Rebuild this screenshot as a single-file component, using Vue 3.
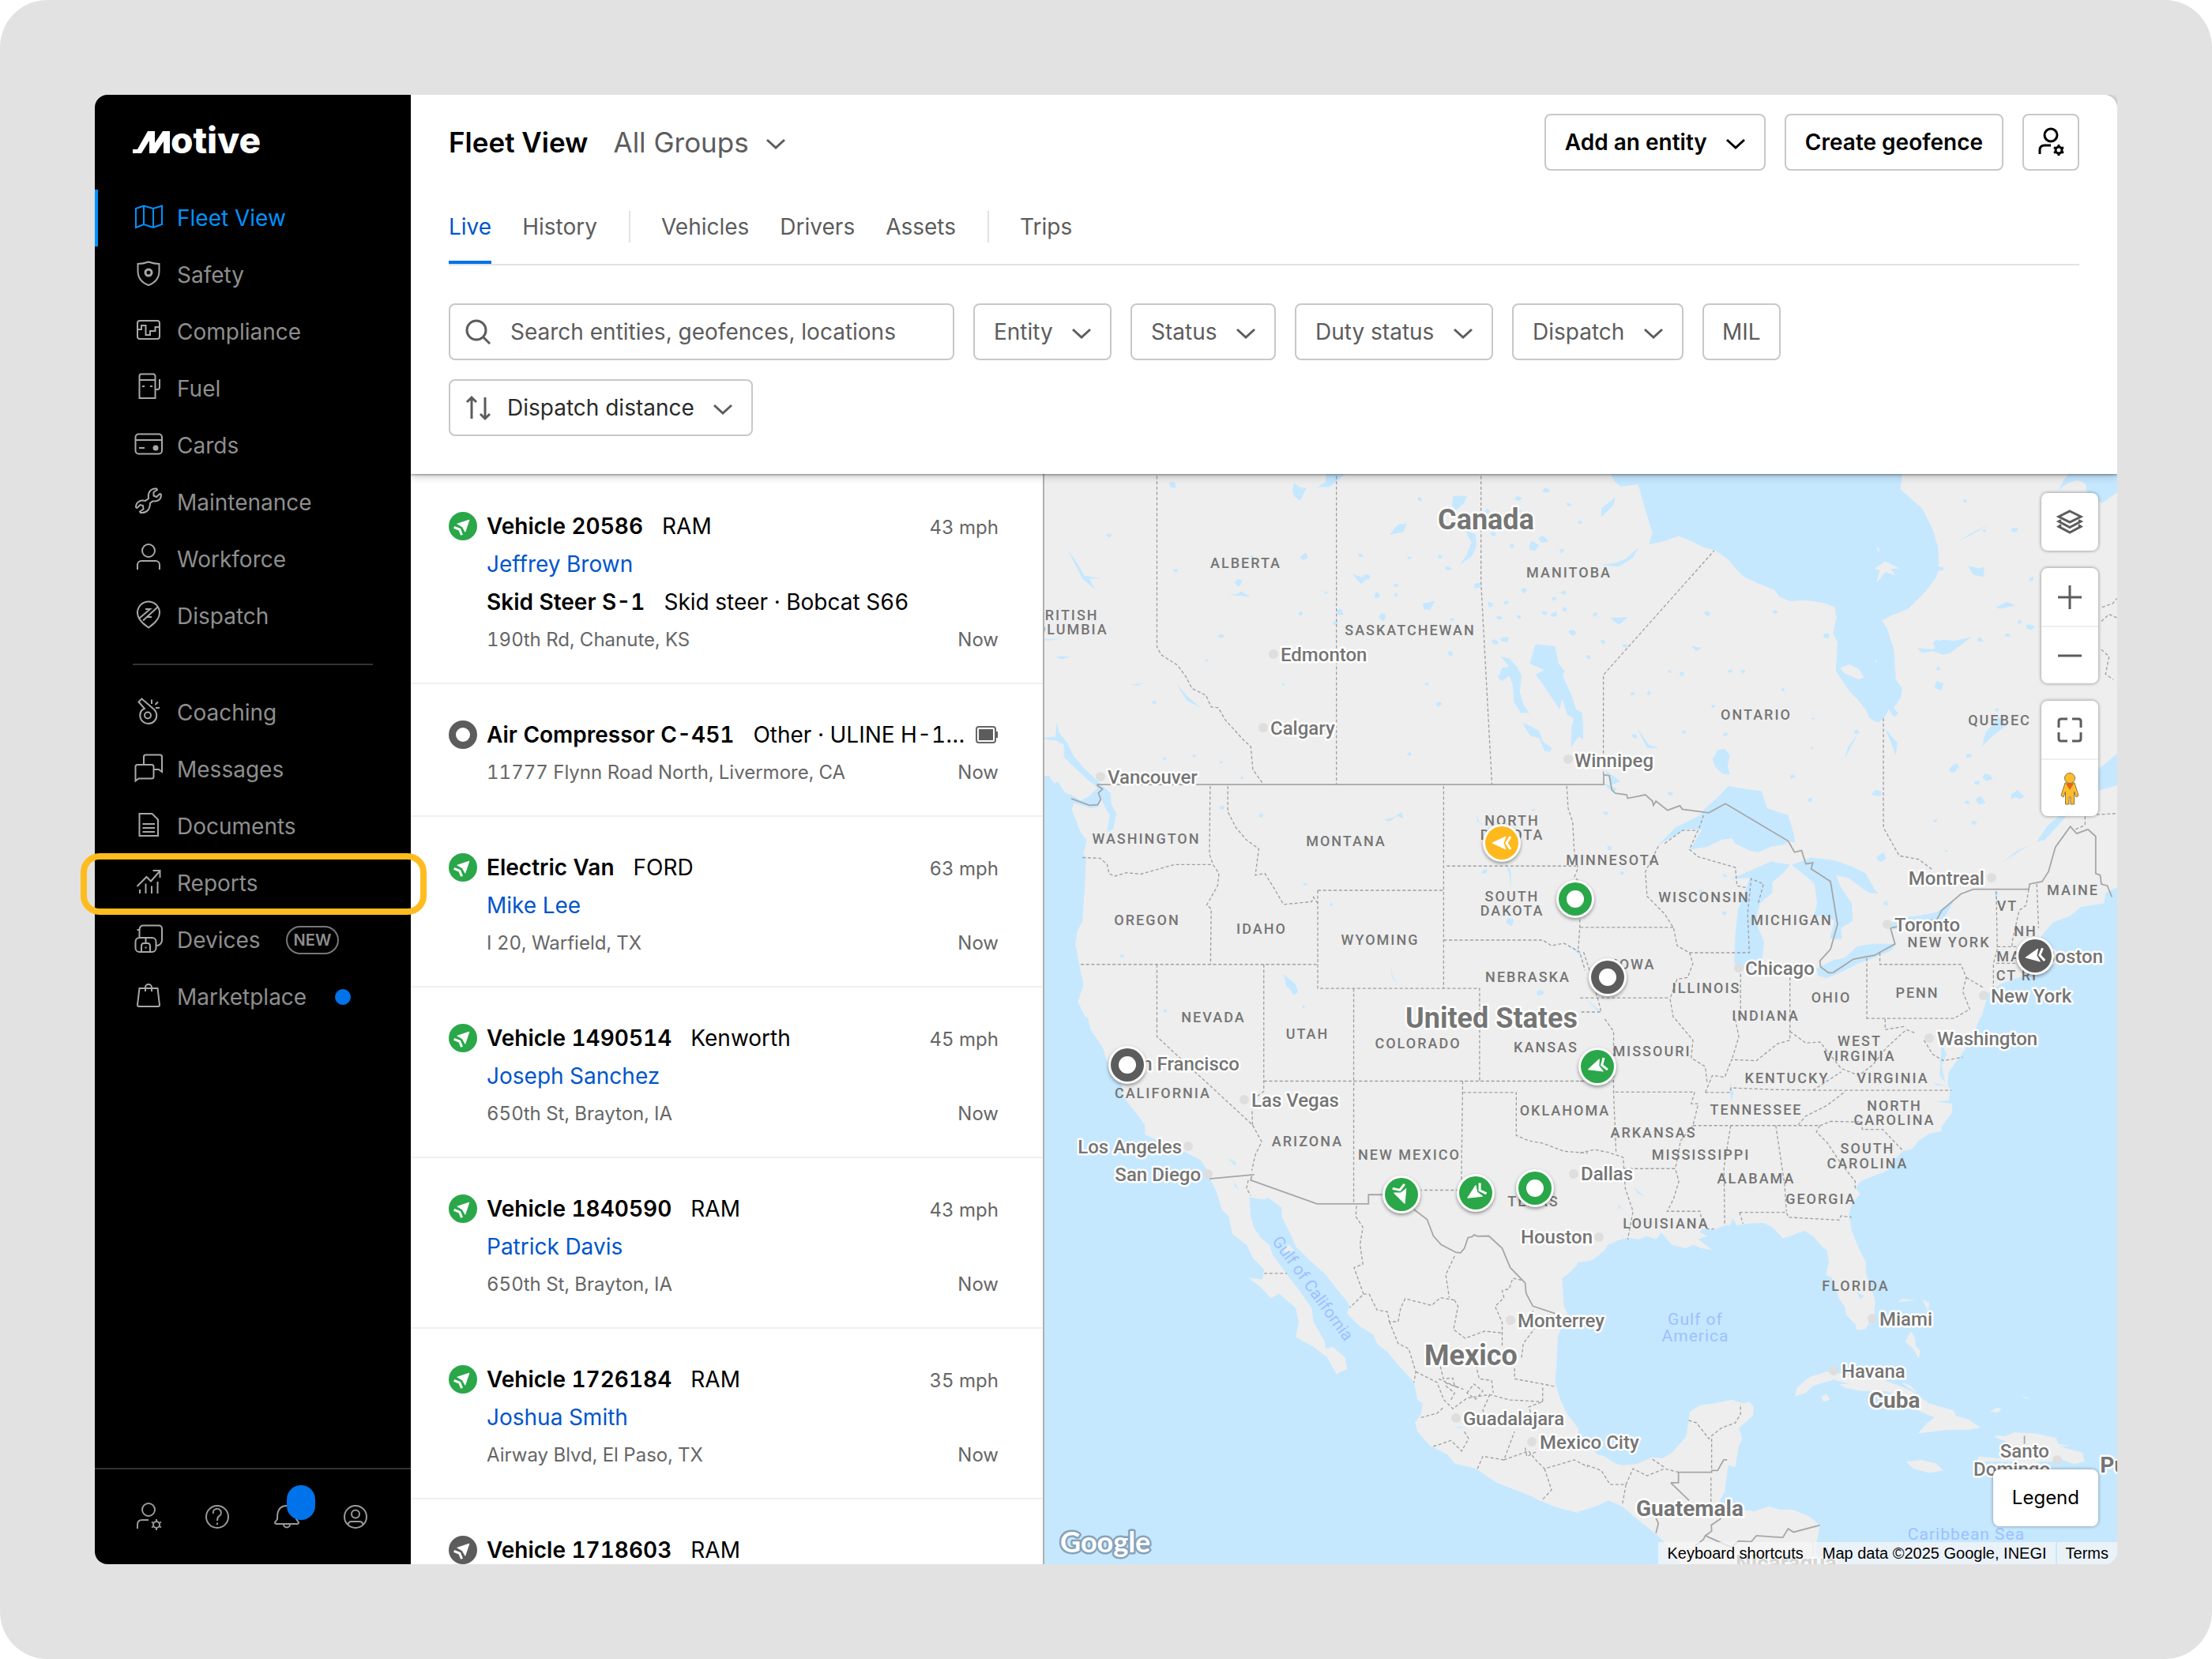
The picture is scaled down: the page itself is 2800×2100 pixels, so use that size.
<script setup>
import { ref } from 'vue'

const icons = {
  map: '<path d="M4 8 14 4.500 26 8 37 4.500V28L26 32 14 28 4 32ZM14 4.500V28M26 8V32"/>',
  shield: '<path d="M6.500 6Q13 6 20 3.500 27 6 33.500 6V15C33.500 24 28 30 20 33 12 30 6.500 24 6.500 15Z"/><circle cx="20" cy="17" r="4" stroke-width="3"/>',
  log: '<rect x="6" y="6" width="28" height="23" rx="3"/><path d="M6 17H11V12H16.500V24H22V19H28.500V14H34"/>',
  fuel: '<path d="M8.500 32V4a2.500 2.500 0 0 1 2.500-2.500H26A2.500 2.500 0 0 1 28.500 4V32ZM8.500 9H28.500M12 17H15M22 17H25M28.500 21H31A3 3 0 0 0 34 18V8"/>',
  card: '<rect x="3.500" y="5.500" width="33.500" height="25" rx="4"/><path d="M3.500 13H37M8 23H15"/><circle cx="29" cy="23" r="3.500" fill="currentColor" stroke="none"/>',
  wrench: '<path d="M20 15C19 8 22 2 30 2.500L31 4 26.500 7V11.500L30 13 34.500 9 36 10C36 17 31 19 25 18.500L22 21C22 28 18 34 10 33L9 31.500 13.500 28.500 13 24 9.500 23 5.500 27 4 26C4 19 10 16.500 16 18Z"/>',
  person: '<circle cx="20" cy="9" r="8"/><path d="M6 33V27a5 5 0 0 1 5-5H29a5 5 0 0 1 5 5V33"/>',
  dispatch: '<path d="M20 34.500C14 30 6 24 6 15.500A14 14 0 0 1 34 15.500C34 24 26 30 20 34.500ZM8.500 22.500 22 11H16M31.500 8.500 18 21H24M13 25.500 19 20"/>',
  whistle: '<path d="M15 15 7.500 6.500 11.500 2.500 27 16A10.500 10.500 0 1 1 12 16.500ZM24 3.500V9M28.500 10 32 6.500M29 14H34"/><circle cx="19" cy="23.500" r="4"/>',
  chat: '<path d="M14 14V4A2.500 2.500 0 0 1 16.500 1.500H34.500A2.500 2.500 0 0 1 37 4V23L33 20H27M3.500 34.500V16.500A2.500 2.500 0 0 1 6 14H24A2.500 2.500 0 0 1 26.500 16.500V29A2.500 2.500 0 0 1 24 31.500H7.500Z"/>',
  doc: '<path d="M8.500 4H24.500L32 11.500V32H8.500ZM12.500 17H28M12.500 22H28M12.500 27H28"/>',
  chart: '<path d="M5.500 24 17.500 12 23 17.500 34 5M25.500 4H34.500V13M9 28V33M16.500 20.500V33M24 23.500V33M31.500 18V33"/>',
  devices: '<path d="M5.500 7H8.500V16M8.500 8C8.500 4 10 1.500 13 1.500H33A4 4 0 0 1 37 5.500V20C37 24 34 27 30 27"/><rect x="3.500" y="17" width="26" height="18" rx="5"/><path d="M11 35V28Q11 24 14 24H19Q22 24 22 28V35M16.500 17V24M16.500 28.500V30.500"/>',
  bag: '<path d="M8.500 9H31.500L34 30Q34 32 32 32H8Q6 32 6 30ZM16 13V8a4 4 0 0 1 8 0V13"/>',
  userGear: '<circle cx="20" cy="11" r="8"/><path d="M6 35V30C6 26 8 24 12 24H20"/><circle cx="30" cy="30" r="4"/><path d="M30 23V26M30 34V37M24 26.500 26.500 28M33.500 32 36 33.500M24 33.500 26.500 32M33.500 28 36 26.500"/>',
  help: '<circle cx="20" cy="20" r="14"/><path d="M15 16A5 5 0 1 1 22.500 19Q20 20.500 20 25M20 27.500V30"/>',
  bell: '<path d="M8 21C8 11 12 6 20 6S32 11 32 21V23L35 27Q35 29 33 29H7Q5 29 5 27L8 23ZM16 29.500A4 4 0 0 0 24 29.500"/>',
  account: '<circle cx="20" cy="20" r="14"/><circle cx="20" cy="16.500" r="5"/><path d="M10.500 30C11 27 13 26 15 26H25C27 26 29 27 29.500 30"/>',
  chevron: '<path d="M9 17 20 27 31 17"/>',
  search: '<circle cx="17" cy="18" r="12"/><path d="M26 27 34 35"/>',
  sort: '<path d="M11 34V7M5 13 11 7 17 13M28 7V34M22 28 28 34 34 28"/>',
  layers: '<path d="M20 6 34 13 20 20 6 13ZM9 17.500 6 19 20 26.500 34 19 31 17.500M9 23.500 6 25.500 20 33 34 25.500 31 23.500"/>',
  plus: '<path d="M5 20H35M20 5V35"/>',
  minus: '<path d="M5 20H35"/>',
  expand: '<path d="M17 6H9Q6 6 6 9V17M23 6H31Q34 6 34 9V17M34 23V31Q34 34 31 34H23M17 34H9Q6 34 6 31V23"/>',
}

const primaryNav = [
  { label: 'Fleet View', icon: 'map', active: true },
  { label: 'Safety', icon: 'shield' },
  { label: 'Compliance', icon: 'log' },
  { label: 'Fuel', icon: 'fuel' },
  { label: 'Cards', icon: 'card' },
  { label: 'Maintenance', icon: 'wrench' },
  { label: 'Workforce', icon: 'person' },
  { label: 'Dispatch', icon: 'dispatch' },
]
const secondaryNav = [
  { label: 'Coaching', icon: 'whistle' },
  { label: 'Messages', icon: 'chat' },
  { label: 'Documents', icon: 'doc' },
  { label: 'Reports', icon: 'chart', highlight: true },
  { label: 'Devices', icon: 'devices', badge: 'NEW' },
  { label: 'Marketplace', icon: 'bag', dot: true },
]
const footerActions = [
  { label: 'Admin', icon: 'userGear' },
  { label: 'Help', icon: 'help' },
  { label: 'Notifications', icon: 'bell', count: true },
  { label: 'Account', icon: 'account' },
]
const tabGroups = [['Live', 'History'], ['Vehicles', 'Drivers', 'Assets'], ['Trips']]
const filters = ['Entity', 'Status', 'Duty status', 'Dispatch']
const query = ref('')

const entities = [
  { name: 'Vehicle 20586', make: 'RAM', speed: '43 mph', driver: 'Jeffrey Brown', asset: 'Skid Steer S-1', assetInfo: 'Skid steer · Bobcat S66', place: '190th Rd, Chanute, KS', state: 'moving' },
  { name: 'Air Compressor C-451', make: 'Other · ULINE H-1…', battery: true, place: '11777 Flynn Road North, Livermore, CA', state: 'idle' },
  { name: 'Electric Van', make: 'FORD', speed: '63 mph', driver: 'Mike Lee', place: 'I 20, Warfield, TX', state: 'moving' },
  { name: 'Vehicle 1490514', make: 'Kenworth', speed: '45 mph', driver: 'Joseph Sanchez', place: '650th St, Brayton, IA', state: 'moving' },
  { name: 'Vehicle 1840590', make: 'RAM', speed: '43 mph', driver: 'Patrick Davis', place: '650th St, Brayton, IA', state: 'moving' },
  { name: 'Vehicle 1726184', make: 'RAM', speed: '35 mph', driver: 'Joshua Smith', place: 'Airway Blvd, El Paso, TX', state: 'moving' },
  { name: 'Vehicle 1718603', make: 'RAM', state: 'off' },
]

/* Geography, in four tiles that share one scale. */
const tiles = [
  {
    x: 0, y: 0,
    water: 'M0 878H40L55 900 65 895 85 925 110 935 130 948 155 961 180 966 160 970 110 955 105 975 115 1000 130 1040 147 1060 138 1100 145 1110 142 1180 135 1290 120 1320 115 1355 125 1410 138 1470 122 1520 150 1575H0ZM62 725 68 755 92 785 110 822 140 858 175 890 190 905 215 928 217 960 231 985 222 1030 205 1038 212 990 195 960 187 940 182 966 155 962 130 948 155 935 178 912 150 890 118 860 82 825 82 790 60 778 24 775V769L58 768ZM1420 505 1475 510 1485 560 1502 580 1497 595 1522 650 1535 690 1552 700 1555 760 1540 770 1520 798 1522 740 1528 715 1510 705 1495 660 1488 690 1440 618 1420 590 1445 578 1403 560ZM1313 600 1325 572 1345 568 1320 540 1345 545 1368 570 1380 595 1375 640 1387 680 1402 700 1378 700 1358 668 1355 620 1345 595 1325 610ZM1370 710 1390 740 1385 728 1430 750 1440 780 1467 800 1460 810 1445 808 1430 772 1405 765ZM1183 113 1186 84 1225 85 1217 105 1195 125ZM1005 195 1030 165 1055 162 1045 187 1015 193ZM1215 175 1250 195 1252 225 1240 255 1205 280 1225 250 1238 215ZM730 70 735 48 752 60 770 62 752 98 735 85ZM800 60 825 45 825 22H880L835 60ZM92 235 120 275 140 310 185 318 155 320 170 350 135 320ZM550 365 575 362 585 355 612 372 585 368ZM1100 390 1135 382 1120 408 1102 406ZM705 1440 740 1470 746 1492 735 1500 712 1472ZM990 1003 1020 995 1040 980 1045 1000 1028 992 1005 1008ZM26 490H80L30 495ZM60 540 102 540 75 548ZM270 620 310 615 290 622ZM400 615 430 650 470 685 430 665ZM1510 1355 1545 1378 1568 1440 1548 1390ZM1250 985 1255 1010 1280 1018 1262 1015ZM1335 1120 1350 1150 1350 1200 1345 1160ZM1010 1422 1012 1450 1030 1468 1015 1448ZM900 305 925 315 950 310 925 335Z',
    land: '',
    border: 'M175 903H1546M103 943 155 962 178 960 187 945 180 927 192 916 176 905',
    dashed: 'M346 28V512L358 535 405 565 430 600 445 630 485 650 500 683 520 685 540 720 590 775 612 795 618 860 648 903M855 28V903M1265 28V330L1296 903M497 907 495 1100 505 1130 522 1155 518 1190 487 1245 500 1255 498 1413M547 907V980L570 1025 600 1060 635 1085 625 1160 652 1155 680 1200 705 1243 785 1235 790 1222 802 1240M1159 907V1481M802 1203H1159M802 1203V1481H1261V1568M1168 1134H1535M1508 907 1512 970 1525 1010 1530 1100 1540 1140 1530 1165 1545 1180V1310L1540 1378M1159 1344H1440L1465 1360 1500 1353 1545 1378 1560 1430M135 1110 185 1112 205 1130 210 1155 225 1163 260 1153 300 1157 395 1130H505M130 1413H802M346 1413V1568M649 1413V1568M904 1481V1568',
  },
  {
    x: 1546, y: 0,
    water: 'M80 15 100 45 115 58 165 52 175 90 190 140 205 190 195 222 230 215 280 198 320 215 350 230 385 240 420 265 445 295 465 315 510 335 550 350 565 370 595 383 640 380 690 388 722 400 727 430 717 475 730 500 725 580 765 640 785 660 810 690 820 715 845 728 865 710 875 690 890 712 902 702 890 685 910 655 913 630 895 605 890 520 870 460 855 438 880 425 930 405 980 355 1010 315 1017 290 1015 230 1000 180 970 120 930 85 908 65 915 15ZM1355 70 1375 35 1390 15H1523V75L1480 105 1437 80 1434 50 1410 40 1380 50ZM220 1075 270 1025 340 990 355 970 390 940 420 907 465 915 515 922 530 970 590 990 605 1040 610 1068 595 1065 570 1075 545 1078 505 1095 480 1090 440 1070 430 1055 400 1060 360 1080 312 1087 345 1030 300 1030ZM437 1408 440 1330 447 1260 472 1195 480 1168 430 1170 480 1148 540 1122 595 1130 580 1150 545 1180 545 1210 510 1240 497 1290 522 1350 515 1410 480 1425 455 1432ZM600 1132 655 1110 720 1118 770 1135 810 1155 835 1200 845 1212 820 1210 790 1190 762 1168 725 1160 740 1195 770 1240 773 1290 740 1310 742 1342 708 1340 722 1290 685 1270 660 1290 672 1240 665 1185 635 1158ZM670 1425 720 1400 750 1395 785 1362 830 1355 898 1355 880 1375 830 1395 790 1410 740 1435 700 1452 675 1445ZM870 1310 900 1280 960 1275 1010 1265 1062 1228 1045 1260 1030 1285 980 1290 920 1315ZM1195 1125 1240 1090 1275 1075 1250 1090ZM1295 1065 1325 1020 1360 990 1385 985 1350 1025 1318 1060ZM1470 860 1523 815V905L1470 920ZM1523 1195 1490 1210 1485 1240 1420 1250 1390 1275 1340 1295 1310 1330 1290 1360 1310 1400 1330 1395 1320 1430 1300 1420 1250 1448 1190 1470 1160 1490 1150 1520 1135 1575H1530V1195ZM375 832 390 805 410 802 425 820 418 850 425 875 405 873 385 855ZM60 280 100 275 130 262 165 232 150 260 110 285ZM60 120 100 88 95 110 60 145ZM955 515 1000 520 1025 492 1060 495 1110 485 1050 530 1030 535 1000 525 970 530ZM1100 282 1130 290 1145 285 1145 315 1115 308ZM1180 400 1210 385 1235 395 1190 405ZM1072 212 1110 190 1165 163 1100 200ZM1140 795 1150 755 1175 725 1185 710 1210 735 1170 765ZM1225 930 1240 918 1260 938 1245 945ZM1120 945 1135 935 1150 955 1130 960ZM85 430 137 428 110 450ZM315 510 345 515 330 525ZM160 740 195 790 225 800 190 800ZM70 860 115 895 85 905 80 880ZM60 895 105 915 95 925ZM1010 610 1030 615 1025 635 1005 630ZM750 830 790 755 760 795ZM865 745 900 785 895 820 880 780ZM0 700 8 730V775L0 770ZM5 1500 60 1548 50 1545ZM1175 1205 1185 1210 1180 1240Z',
    land: 'M738 572 765 562 790 575 805 600 790 605 750 588ZM840 228 850 235 845 245ZM865 270 905 290 880 292 895 310 865 300 840 332 850 295 835 290ZM835 548 842 552 838 558Z',
    border: 'M0 903H67V875L83 878 90 918 100 928 132 932 135 942 185 932 205 950 208 962 215 950 248 976 283 963 290 973 365 983 412 957 590 1063 608 1095 628 1090 640 1128 660 1125 655 1142 710 1178 730 1300 710 1370 680 1403 682 1420 705 1437 718 1436 775 1398 835 1387 893 1355 880 1310 940 1296 1012 1285 1025 1260 1080 1213 1115 1200H1272L1275 1185 1310 1178 1328 1150 1348 1080 1390 1022 1408 1042 1440 1030 1462 1050V1155L1475 1160 1478 1185 1495 1190 1508 1222',
    dashed: 'M66 875V592L380 240M860 715V1025L905 1105 960 1115 1000 1145M350 990 340 1020 310 1087 335 1108 440 1138 445 1190 470 1195M240 1070 290 1033H330M222 1078 185 1150 190 1220 240 1270 265 1310 275 1360 310 1380 320 1410 305 1450 275 1455 255 1510 265 1568M0 1308H268M310 1380H480L475 1270 485 1170 520 1185 505 1240M455 1440V1568M595 1450V1568M813 1395V1568M850 1380V1413H1080L1095 1450 1085 1490 1105 1540 1060 1566H813M0 1508H250M1180 1205 1183 1370 1172 1410V1480M1295 1185 1300 1310M1272 1200 1265 1245 1245 1260 1225 1350V1363M1183 1363H1260M1180 1410H1290M10 1378 30 1440 50 1510 60 1548H0M1095 1450 1145 1480M1405 1030 1432 1018V990L1523 985M1480 400 1510 390 1522 375M1478 440 1500 420 1522 430M1478 520 1500 540 1490 590 1512 605',
  },
  {
    x: 0, y: 1568,
    water: 'M0-5H150L158 30 192 80 205 120 240 160 250 220 290 270 312 300 312 328 350 345 400 360 440 385 470 400 490 430 500 460 515 490 530 540 550 560 560 610 600 640 620 680 650 710 645 738 605 733 640 760 670 792 692 778 740 820 748 860 740 902 790 930 830 960 855 1007 885 992 880 960 845 930 825 935 820 910 790 860 785 820 750 770 715 725 690 690 675 670 665 640 640 620 620 590 612 560 608 505 650 512 662 507 700 535 700 560 720 600 740 645 780 685 825 725 860 770 885 800 893 815 885 835 920 870 960 895 970 920 1000 945 1030 980 1075 1030 1085 1080 1100 1090 1095 1120 1078 1145 1085 1170 1120 1210 1170 1235 1190 1260 1250 1275 1310 1315 1400 1350 1430 1365 1480 1385 1540 1400 1575 1397V1575H0ZM1575 685 1540 690 1535 700 1510 725 1495 735 1497 770 1500 812 1510 835 1483 900 1478 1000 1475 1030 1490 1080 1510 1120 1540 1160 1575 1200ZM548 396 570 405 568 418ZM560 455 580 485 568 475ZM1195 1155 1225 1160 1200 1160Z',
    land: 'M700 650 720 640 735 655 715 665Z',
    border: 'M495 453 622 441M615 445 612 457 800 524H946V498H985M1075 540 1112 568 1130 615 1152 640 1195 662 1207 663 1218 650 1228 620 1240 617 1245 612 1255 616 1287 615 1325 650 1348 705 1390 748 1393 778 1412 814 1475 835',
    dashed: 'M346 0V50L617 300 643 348 625 385 615 430M617 300 615 230 649 205V0M904 0V524M649 176H1568M1261 0V176M1213 176 1209 485H1095M1213 208H1365V330L1400 345 1440 352 1500 375 1568 380M605 457 600 480 612 500M650 721H715M912 530 910 560 930 590 922 640 930 695 905 705 932 780 893 818M932 780 948 780 970 825 1000 830 1005 858 1030 858 1037 820 1050 793 1125 812 1150 790 1190 797M1190 672 1165 725 1175 790M1190 797 1200 815 1187 880 1220 905 1275 885 1325 890M1005 858 1030 920 1060 935 1080 1000 1075 1030M1380 740 1355 735 1345 765 1325 770 1330 790 1305 815 1325 860V930M1080 1000 1140 1030 1160 1080 1185 1105 1225 1075 1290 1065 1345 1080 1440 1085M1145 1020 1200 1045 1160 1030M1150 985 1158 1020 1185 1018 1190 1040 1215 1050M1165 1040 1190 1060 1180 1080M1225 1060 1245 1035 1270 1055 1250 1078ZM1250 980 1260 1020 1295 1025 1300 1060M1360 990V1020L1440 1035 1475 1042M1440 1045V1085L1400 1100 1420 1150M1380 960 1385 920 1415 880 1412 824M1095 1130 1140 1118 1160 1100M1130 1212 1180 1195 1210 1225 1230 1190 1215 1165M1290 1065 1270 1110 1290 1140M1255 1275 1270 1240 1330 1250 1360 1170M1330 1250 1400 1225 1420 1250 1445 1275 1530 1250 1568 1270M1390 1215 1395 1240 1425 1225M1445 1275 1465 1335 1440 1362',
  },
  {
    x: 1546, y: 1568,
    water: 'M-5 690 20 688 40 680 70 655 78 640 115 625 135 620 165 625 190 615 215 625 230 605 260 640 300 650 320 640 345 650 375 655 350 635 335 625 360 615 340 605 345 595 380 597 410 585 425 585 432 565 445 585 475 580 520 578 545 590 575 622 610 610 635 600 660 615 690 650 700 655 705 690 697 725 715 735 735 795 750 815 755 840 780 865 785 882 810 878 820 860 832 855 837 800 825 760 810 720 810 690 790 650 770 600 762 555 770 525 795 495 780 480 795 460 820 450 870 430 890 400 915 375 940 370 960 345 990 325 1025 318 1025 305 1055 265 1055 240 1010 235 1045 230 1050 205 1042 185 1045 150 1060 130 1085 95 1110 55 1120 30 1135-5H1575V1575H680L668 1500 680 1435 650 1410 600 1390 570 1392 535 1382 495 1395 440 1390 400 1415 380 1395 410 1340 415 1300 420 1265 440 1270 450 1210 460 1190 450 1160 490 1125 492 1100 480 1085 465 1090 430 1080 380 1090 340 1095 310 1115 308 1140 300 1185 260 1230 235 1245 205 1242 160 1262 120 1265 100 1260 70 1240 50 1235 30 1215-5 1185ZM-5 1397 50 1380 80 1365 120 1382 170 1425 215 1460 240 1485 270 1520 300 1575H-5ZM1025 70 1040 100 1025 130 1035 180 1020 160ZM1000 180 1038 190 1010 187ZM785 775 805 785 795 795ZM105 525 122 540 110 535ZM150 475 185 505 165 495ZM425 180 435 210 428 235Z',
    land: 'M610 1070 615 1045 650 1015 700 1000 740 1005 790 1015 850 1020 900 1038 940 1055 990 1090 1060 1110 1065 1125 1100 1135 1135 1158 1100 1165 1040 1165 958 1175 985 1145 1005 1130 960 1110 930 1080 870 1055 800 1055 750 1045 735 1035 762 1035 720 1022 660 1040 640 1060ZM683 1070 700 1063 708 1080 690 1085ZM900 803 915 793 950 797ZM970 795 990 805 987 828ZM938 885 950 905 950 925 965 942 960 962 945 935 922 915ZM1175 1180 1205 1183 1230 1172 1290 1175 1350 1188 1355 1205 1390 1210 1360 1212 1425 1230 1430 1255 1400 1262 1370 1250 1330 1255 1300 1255 1265 1287 1245 1255 1200 1255 1125 1255 1130 1240 1200 1247 1230 1240 1215 1200 1180 1188ZM925 1255 965 1250 1010 1260 1030 1280 990 1287 945 1275ZM1163 1113 1180 1102 1195 1105 1185 1116ZM1250 1068 1275 1075 1265 1077ZM910 1030 935 1038 955 1058 930 1045Z',
    border: 'M257 1315H279V1285H373V1280H390L407 1250H417M257 1315 309 1365M400 1416 372 1435 373 1452 355 1465 350 1475 325 1495M355 1465 400 1485 430 1497 450 1480 485 1482 500 1465 545 1468 575 1470 590 1445 605 1455 680 1435M215 1415 222 1430 215 1458M1260 1182V1205',
    dashed: 'M308 1138 330 1145 365 1190 375 1180 400 1160 440 1145 455 1120V1092M373 1190V1280M371 1300V1370M20 1265 60 1280 85 1320H130L120 1375M130 1320 150 1275 190 1295 240 1275 279 1285M205 1248 240 1272M70 0 95 35V210L102 380M100 207H325L315 240H335L320 302 285 345 270 425M0 380 40 370 80 378 122 392 128 480 150 545 135 625M125 424H270L280 460 265 510 247 545H340L345 575 360 595H380M320 302H680M427 302 408 420 410 585M555 302 580 470 585 545M452 548H585L590 562 735 570 740 558 770 562M452 548 462 580M680 302 670 320 700 350 740 410 780 460V485M680 302 710 290 798 292 800 313H858L915 373M618 300 640 275 700 245 752 205M355 208H425L428 195 550 200 680 202H1053M355 208 375 160 410 165 430 115 500 118 560 70 595 60V0M270 0 320 60 315 110 355 135 360 180M440 0 450 50 432 110M595 35 640 68 680 65 740 140 790 160 830 130 870 80 925 30 950 40M660 202 740 150M865 0V30L925 20M975 60 1000 100 1030 118 1085 108M0 176H95',
  },
]

/* Small inland lakes: x, y, size. */
const lakes = [
  [393, 52, 12], [210, 198, 8], [397, 295, 8], [580, 328, 14], [615, 258, 6], [752, 418, 8], [866, 412, 12], [826, 360, 6], [850, 445, 9],
  [988, 425, 14], [942, 316, 12], [968, 368, 10], [924, 252, 8], [1026, 340, 8], [1022, 366, 7], [1092, 92, 9], [1062, 262, 7], [1148, 258, 7],
  [1172, 288, 9], [1258, 340, 12], [1280, 130, 10], [1300, 190, 10], [1330, 160, 9], [1352, 228, 8], [1370, 90, 10], [1374, 128, 8], [1410, 230, 18],
  [1440, 205, 16], [1452, 70, 12], [1514, 110, 7], [1545, 158, 7], [1496, 240, 8], [1290, 395, 10], [1316, 428, 10], [1338, 388, 9], [1305, 500, 10],
  [1330, 490, 12], [1390, 352, 10], [1372, 430, 8], [1444, 415, 9], [1474, 376, 9], [1500, 360, 8], [1470, 420, 10], [1504, 405, 8], [1525, 475, 12],
  [1182, 434, 8], [1148, 674, 11], [1112, 618, 5], [1060, 816, 7], [1180, 530, 9], [705, 620, 5], [528, 968, 9], [643, 990, 9], [768, 1186, 6],
  [838, 1243, 6], [248, 1388, 7], [1414, 976, 5], [1273, 1150, 10], [1350, 1290, 16], [1435, 1494, 11], [368, 1545, 6], [762, 1532, 5], [530, 483, 9],
  [760, 258, 14], [487, 550, 6], [340, 670, 7], [367, 830, 6], [452, 820, 6], [530, 840, 6], [586, 885, 6], [1570, 540, 9], [1590, 420, 8],
  [1610, 500, 8], [1672, 508, 8], [1698, 645, 8], [1740, 645, 8], [1800, 582, 7], [1836, 588, 8], [1906, 420, 9], [1970, 580, 7], [2010, 582, 8],
  [2120, 635, 7], [2098, 412, 9], [2246, 480, 10], [1840, 755, 7], [1956, 760, 8], [1925, 680, 7], [1700, 768, 10], [1618, 983, 9], [1630, 1082, 8],
  [1802, 930, 8], [2146, 880, 8], [2200, 945, 8], [2204, 800, 5], [2206, 715, 6], [2330, 752, 8], [2390, 930, 14], [2396, 1110, 16], [2414, 1238, 9],
  [2645, 955, 9], [2670, 898, 10], [2700, 880, 14], [2650, 822, 9], [2600, 860, 14], [2614, 848, 9], [2585, 1092, 5], [2552, 1006, 7], [2662, 1010, 8],
  [2780, 935, 12], [2726, 692, 6], [2680, 490, 10], [2760, 480, 9], [2790, 442, 9], [2820, 455, 12], [2828, 320, 8], [2636, 100, 7], [2692, 182, 6],
  [2570, 292, 10], [2560, 575, 8], [2776, 180, 10], [2560, 502, 12], [1954, 1270, 8], [1955, 1160, 7], [1890, 1205, 7], [1664, 1155, 8],
]
const lakePath = lakes
  .map(([x, y, s], i) => {
    const points = [0, 1, 2, 3, 4].map((k) => {
      const angle = (k / 5) * 6.283 + i
      const r = s * (0.5 + ((i * 7 + k * 5) % 6) / 6)
      return `${Math.round(x + Math.cos(angle) * r)} ${Math.round(y + Math.sin(angle) * r * 0.8)}`
    })
    return `M${points.join(' ')}Z`
  })
  .join('')

const regions = [
  ['ALBERTA', 257, 119], ['BRITISH', 30, 185], ['COLUMBIA', 30, 203], ['SASKATCHEWAN', 465, 204], ['MANITOBA', 666, 131],
  ['WASHINGTON', 131, 468], ['MONTANA', 384, 471], ['NORTH', 594, 445], ['DAKOTA', 594, 463], ['MINNESOTA', 722, 495],
  ['SOUTH', 594, 541], ['DAKOTA', 594, 559], ['OREGON', 132, 571], ['IDAHO', 277, 582], ['WYOMING', 427, 596],
  ['NEBRASKA', 614, 643], ['NEVADA', 216, 694], ['UTAH', 335, 715], ['COLORADO', 475, 727], ['KANSAS', 637, 732],
  ['CALIFORNIA', 152, 790], ['ARIZONA', 335, 851], ['NEW MEXICO', 464, 868], ['OKLAHOMA', 661, 812], ['TEXAS', 621, 927],
  ['ONTARIO', 903, 311], ['QUEBEC', 1211, 318], ['WISCONSIN', 837, 542], ['MICHIGAN', 948, 571], ['MAINE', 1304, 533],
  ['VT', 1221, 553], ['NH', 1244, 585], ['MASS', 1236, 617], ['CT', 1220, 641], ['RI', 1249, 641], ['NEW YORK', 1147, 599],
  ['IOWA', 749, 627], ['ILLINOIS', 840, 657], ['OHIO', 998, 669], ['PENN', 1107, 663], ['INDIANA', 915, 692],
  ['MISSOURI', 771, 737], ['WEST', 1034, 724], ['VIRGINIA', 1034, 743], ['KENTUCKY', 942, 771], ['VIRGINIA', 1076, 771],
  ['TENNESSEE', 903, 811], ['NORTH', 1078, 806], ['CAROLINA', 1078, 824], ['ARKANSAS', 773, 840], ['MISSISSIPPI', 833, 868],
  ['SOUTH', 1044, 860], ['CAROLINA', 1044, 879], ['ALABAMA', 903, 898], ['GEORGIA', 985, 924], ['LOUISIANA', 789, 955], ['FLORIDA', 1029, 1034],
]
const countries = [['Canada', 561, 70], ['United States', 568, 701], ['Mexico', 542, 1128]]
const smallCountries = [['Cuba', 1078, 1182], ['Guatemala', 819, 1319], ['Puerto Rico', 1412, 1264], ['Nicaragua', 941, 1388]]
const seas = [['Gulf of', 826, 1077], ['America', 826, 1098], ['Caribbean Sea', 1169, 1349]]
/* name, text x, baseline, anchor, dot x, dot y */
const cities = [
  ['Edmonton', 301, 237, 'start', 292, 228], ['Calgary', 288, 330, 'start', 279, 321], ['Vancouver', 82, 392, 'start', 73, 383],
  ['Winnipeg', 673, 371, 'start', 665, 361], ['San Francisco', 249, 755, 'end'], ['Las Vegas', 264, 801, 'start', 255, 792],
  ['Los Angeles', 176, 860, 'end', 184, 851], ['San Diego', 200, 895, 'end', 209, 886], ['Dallas', 681, 894, 'start', 672, 886],
  ['Houston', 696, 974, 'end', 704, 966], ['Monterrey', 601, 1080, 'start', 592, 1071], ['Guadalajara', 532, 1204, 'start', 523, 1195],
  ['Mexico City', 629, 1234, 'start', 619, 1225], ['Montreal', 1192, 520, 'end', 1201, 511], ['Toronto', 1078, 579, 'start', 1069, 570],
  ['Boston', 1342, 619, 'end'], ['New York', 1200, 669, 'start', 1191, 660], ['Chicago', 889, 634, 'start', 881, 625],
  ['Washington', 1132, 723, 'start', 1122, 714], ['Miami', 1059, 1078, 'start', 1050, 1069], ['Havana', 1011, 1144, 'start', 1001, 1135],
  ['Santo', 1274, 1245, 'end', 1284, 1248], ['Domingo', 1275, 1268, 'end'],
]
const pins = [
  { x: 581, y: 467, color: '#ffb91d', turn: 0 },
  { x: 674, y: 538, color: '#2aa749' },
  { x: 715, y: 637, color: '#5c5c5c' },
  { x: 702, y: 750, color: '#2aa749', turn: -18 },
  { x: 107, y: 748, color: '#5c5c5c' },
  { x: 454, y: 912, color: '#2aa749', turn: -110 },
  { x: 548, y: 910, color: '#2aa749', turn: -32 },
  { x: 623, y: 904, color: '#2aa749' },
  { x: 1256, y: 610, color: '#5c5c5c', turn: -10 },
]
</script>

<template>
  <div class="page">
    <div class="app">
      <aside class="sidebar">
        <a class="logo" href="#" aria-label="Motive">
          <svg class="logo-mark" viewBox="0 0 48 38"><path fill="#fff" d="M0 36V31H6L19 8H28V23L38 8H47V36H39V21L29 36H21V20L11 36Z" /></svg>
          <span class="logo-word">otive</span>
        </a>
        <nav class="nav">
          <a v-for="item in primaryNav" :key="item.label" href="#" class="nav-item" :class="{ active: item.active }">
            <svg class="icon" viewBox="0 0 40 40" v-html="icons[item.icon]"></svg>
            <span>{{ item.label }}</span>
          </a>
          <hr class="nav-rule">
          <a v-for="item in secondaryNav" :key="item.label" href="#" class="nav-item" :class="{ highlight: item.highlight }">
            <svg class="icon" viewBox="0 0 40 40" v-html="icons[item.icon]"></svg>
            <span>{{ item.label }}</span>
            <span v-if="item.badge" class="pill">{{ item.badge }}</span>
            <i v-if="item.dot" class="dot"></i>
          </a>
        </nav>
        <div class="side-footer">
          <button v-for="action in footerActions" :key="action.label" type="button" class="side-action" :aria-label="action.label">
            <svg class="icon" viewBox="0 0 40 40" v-html="icons[action.icon]"></svg>
            <i v-if="action.count" class="count"></i>
          </button>
        </div>
      </aside>

      <main class="main">
        <header class="header">
          <div class="title-row">
            <h1>Fleet View</h1>
            <label class="group-select">
              <select aria-label="Group"><option>All Groups</option></select>
              <svg class="icon chevron" viewBox="0 0 40 40" v-html="icons.chevron"></svg>
            </label>
            <div class="actions">
              <button type="button" class="btn">Add an entity<svg class="icon chevron" viewBox="0 0 40 40" v-html="icons.chevron"></svg></button>
              <button type="button" class="btn">Create geofence</button>
              <button type="button" class="btn square" aria-label="Fleet settings"><svg class="icon" viewBox="0 0 40 40" v-html="icons.userGear"></svg></button>
            </div>
          </div>
          <nav class="tabs">
            <div v-for="(group, i) in tabGroups" :key="i" class="tab-group">
              <a v-for="tab in group" :key="tab" href="#" class="tab" :class="{ active: tab === 'Live' }">{{ tab }}</a>
            </div>
          </nav>
          <div class="filters">
            <label class="search">
              <svg class="icon" viewBox="0 0 40 40" v-html="icons.search"></svg>
              <input v-model="query" type="text" aria-label="Search" placeholder="Search entities, geofences, locations">
            </label>
            <label v-for="filter in filters" :key="filter" class="filter">
              <select :aria-label="filter"><option>{{ filter }}</option></select>
              <svg class="icon chevron" viewBox="0 0 40 40" v-html="icons.chevron"></svg>
            </label>
            <button type="button" class="btn plain">MIL</button>
            <label class="filter sort">
              <svg class="icon" viewBox="0 0 40 40" v-html="icons.sort"></svg>
              <select aria-label="Sort by"><option>Dispatch distance</option></select>
              <svg class="icon chevron" viewBox="0 0 40 40" v-html="icons.chevron"></svg>
            </label>
          </div>
        </header>

        <div class="body">
          <ul class="list">
            <li v-for="e in entities" :key="e.name" class="entity">
              <svg class="status" :class="e.state" viewBox="-18 -18 36 36">
                <circle r="18" fill="currentColor" />
                <circle v-if="e.state === 'idle'" r="9" fill="#fff" />
                <g v-else transform="rotate(135)"><path d="M-11 0 3 -7 1 0 3 7Z" class="arrow" /><path d="M9 -7 6 0 9 7" class="tail" /></g>
              </svg>
              <div class="details">
                <div class="line"><p class="entity-title"><b>{{ e.name }}</b>{{ e.make }}</p>
                  <span v-if="e.speed" class="meta">{{ e.speed }}</span>
                  <svg v-if="e.battery" class="battery" viewBox="0 0 30 24"><rect x="2" y="2" width="24" height="20" rx="3" fill="none" stroke="#666" stroke-width="2" /><rect x="5" y="5" width="18" height="14" fill="#5c5c5c" /><rect x="27" y="8" width="2" height="8" fill="#5c5c5c" /></svg>
                </div>
                <div v-if="e.driver" class="line"><a href="#">{{ e.driver }}</a></div>
                <div v-if="e.asset" class="line"><p class="entity-title"><b>{{ e.asset }}</b>{{ e.assetInfo }}</p></div>
                <div v-if="e.place" class="line meta"><span>{{ e.place }}</span><span>Now</span></div>
              </div>
            </li>
          </ul>

          <section class="map" aria-label="Map">
            <svg class="map-canvas" viewBox="2 0 1358 1380" preserveAspectRatio="xMidYMid slice">
              <g transform="translate(-10 -10) scale(0.4464)">
                <g v-for="(tile, i) in tiles" :key="i" :transform="`translate(${tile.x} ${tile.y})`">
                  <path :d="tile.water" class="water" />
                  <path v-if="tile.land" :d="tile.land" class="land" />
                </g>
                <path :d="lakePath" class="water" />
                <g v-for="(tile, i) in tiles" :key="'b' + i" :transform="`translate(${tile.x} ${tile.y})`">
                  <path :d="tile.dashed" class="dashed" />
                  <path :d="tile.border" class="border" />
                </g>
              </g>
              <text v-for="([name, x, y], i) in regions" :key="i" :x="x" :y="y" class="region">{{ name }}</text>
              <text v-for="[name, x, y] in seas" :key="name" :x="x" :y="y" class="sea">{{ name }}</text>
              <text class="sea slanted" transform="translate(336 1035) rotate(54)">Gulf of California</text>
              <template v-for="[name, x, y, anchor, dx, dy] in cities" :key="name">
                <circle v-if="dx" :cx="dx" :cy="dy" r="6" class="city-dot" />
                <text :x="x" :y="y" :text-anchor="anchor" class="city">{{ name }}</text>
              </template>
              <text v-for="[name, x, y] in countries" :key="name" :x="x" :y="y" class="country">{{ name }}</text>
              <text v-for="[name, x, y] in smallCountries" :key="name" :x="x" :y="y" class="country small">{{ name }}</text>
              <text x="22" y="1365" class="google">Google</text>
              <g v-for="(pin, i) in pins" :key="i" :transform="`translate(${pin.x} ${pin.y})`" class="pin">
                <circle r="24" fill="#fff" />
                <circle r="21" :fill="pin.color" />
                <g v-if="pin.turn !== undefined" :transform="`rotate(${pin.turn})`"><path d="M-12 0 5 -8 2 0 5 8Z" class="arrow" /><path d="M11 -8 6 0 11 8" class="tail" /></g>
                <circle v-else r="11" fill="#fff" />
              </g>
            </svg>
            <div class="controls">
              <div class="control"><button type="button" aria-label="Layers"><svg class="icon" viewBox="0 0 40 40" v-html="icons.layers"></svg></button></div>
              <div class="control">
                <button type="button" aria-label="Zoom in"><svg class="icon" viewBox="0 0 40 40" v-html="icons.plus"></svg></button>
                <button type="button" aria-label="Zoom out"><svg class="icon" viewBox="0 0 40 40" v-html="icons.minus"></svg></button>
              </div>
              <div class="control">
                <button type="button" aria-label="Full screen"><svg class="icon" viewBox="0 0 40 40" v-html="icons.expand"></svg></button>
                <button type="button" aria-label="Street view">
                  <svg class="icon pegman" viewBox="0 0 40 40"><path d="M14 13H26L31 29 28 31 25.500 24V40H21V31H19V40H14.500V24L12 31 9 29Z" /><path d="M15 14H25L20 22Z" fill="#e0661a" stroke="none" /><circle cx="20" cy="7" r="6.500" /></svg>
                </button>
              </div>
            </div>
            <button type="button" class="legend">Legend</button>
            <div class="attribution">
              <a href="#">Keyboard shortcuts</a><span>Map data ©2025 Google, INEGI</span><a href="#">Terms</a>
            </div>
          </section>
        </div>
      </main>
    </div>
  </div>
</template>

<style>
body { margin: 0; background: #fff; }
</style>

<style scoped>
* { box-sizing: border-box; }
.page {
  height: 100vh;
  padding: 120px;
  border-radius: 60px;
  background: #e2e2e2;
  font-family: Inter, "Liberation Sans", sans-serif;
  font-size: 28px;
  font-optical-sizing: none;
  line-height: 48px;
  color: #000;
}
.app { display: flex; height: 100%; border-radius: 16px; background: #fff; }
button, select, input { margin: 0; padding: 0; border: 0; background: none; font: inherit; color: inherit; }
a { color: inherit; text-decoration: none; }
.icon { flex: none; width: 40px; height: 40px; fill: none; stroke: currentColor; stroke-width: 2; }

.sidebar { display: flex; flex-direction: column; flex: none; width: 400px; border-radius: 16px 0 0 16px; background: #000; color: #8e8e8e; }
.logo { display: flex; align-items: flex-end; height: 120px; padding: 0 48px 44px; color: #fff; }
.logo-mark { width: 48px; height: 38px; }
.logo-word { height: 38px; font-size: 46px; font-weight: 800; line-height: 38px; }
.nav { flex: 1; }
.nav-item { position: relative; display: flex; align-items: center; gap: 16px; height: 72px; padding: 0 48px; }
.nav-item .icon { color: #a8a8a8; }
.nav-item.active { color: #0093ff; box-shadow: inset 4px 0 #0093ff; }
.nav-item.active .icon { color: #0093ff; }
.nav-rule { width: 304px; height: 2px; margin: 24px 48px; border: 0; background: #333; }
.highlight::after { content: ""; position: absolute; inset: -2px -20px -4px -18px; z-index: 2; border: 8px solid #ffbc1f; border-radius: 24px; }
.pill { height: 36px; margin-left: 16px; padding: 0 8px; border: 2px solid #777; border-radius: 18px; font-size: 20px; font-weight: 600; line-height: 32px; }
.dot { width: 20px; height: 20px; margin-left: 20px; border-radius: 50%; background: #0073ea; }
.side-footer { display: flex; justify-content: space-between; height: 122px; padding: 40px 50px 0 48px; border-top: 2px solid #333; color: #9a9a9a; }
.side-action { position: relative; height: 40px; line-height: 0; }
.count { position: absolute; top: -20px; left: 20px; width: 36px; height: 44px; border-radius: 18px; background: #0073ea; }

.main { display: flex; flex-direction: column; flex: 1; min-width: 0; }
.header { position: relative; z-index: 1; flex: none; height: 480px; padding: 24px 48px 0; border-radius: 0 16px 0 0; background: #fff; box-shadow: 0 1px 3px rgba(0, 0, 0, .4), 0 2px 12px rgba(0, 0, 0, .25); clip-path: inset(0 0 -20px 0); }
.title-row { display: flex; align-items: center; height: 72px; }
h1 { margin: 0 32px 0 0; font-size: 35px; font-weight: 600; }
.group-select { display: flex; align-items: center; gap: 14px; font-size: 35px; color: #5c5c5c; }
select { appearance: none; height: 68px; outline: 0; }
.chevron { stroke-width: 3; }
.actions { display: flex; gap: 24px; margin-left: auto; }
.btn { display: flex; align-items: center; height: 72px; padding: 0 24px; border: 2px solid #c8c8c8; border-radius: 8px; font-weight: 600; }
.btn .chevron { margin: 0 -8px 0 16px; }
.square { padding: 0 14px; }
.square .icon { stroke-width: 3; }
.plain { padding: 0 23px; font-weight: 400; color: #5c5c5c; }
.tabs { display: flex; height: 96px; margin: 24px 0 48px; border-bottom: 2px solid #e2e2e2; color: #5c5c5c; }
.tab-group { display: flex; gap: 39px; }
.tab-group + .tab-group { margin-left: 40px; }
.tab-group + .tab-group::before { content: ""; width: 2px; height: 40px; margin-top: 27px; background: #e2e2e2; }
.tab { height: 94px; padding-top: 23px; }
.tab.active { color: #0055cc; box-shadow: inset 0 -4px #0073ea; }
.filters { display: flex; flex-wrap: wrap; gap: 24px; max-width: 1840px; color: #5c5c5c; }
.search { display: flex; align-items: center; gap: 20px; width: 640px; height: 72px; padding: 0 16px; border: 2px solid #c8c8c8; border-radius: 8px; }
.search input { flex: 1; min-width: 0; outline: 0; }
.search input::placeholder { color: #5c5c5c; opacity: 1; }
.search .icon, .sort .icon { stroke-width: 3; }
.filter { display: flex; align-items: center; gap: 16px; height: 72px; padding: 0 16px 0 24px; border: 2px solid #c8c8c8; border-radius: 8px; }
.sort { padding-left: 16px; }
.sort select { color: #2a2a2a; }

.body { display: flex; flex: 1; min-height: 0; }
.list { flex: none; width: 802px; margin: 0; padding: 2px 0 0; overflow: hidden; border-right: 2px solid #b0b0b0; list-style: none; font-variant-numeric: tabular-nums; }
.entity { display: flex; gap: 12px; padding: 40px 56px 30px 48px; border-bottom: 2px solid #f0f0f0; }
.status { flex: none; width: 36px; height: 36px; margin-top: 6px; color: #5c5c5c; }
.moving { color: #2aa749; }
.details { flex: 1; min-width: 0; }
.line { display: flex; align-items: baseline; justify-content: space-between; height: 48px; }
.line a { color: #0055cc; }
.entity-title { min-width: 0; margin: 0; overflow: hidden; text-overflow: ellipsis; white-space: nowrap; }
.entity-title b { margin-right: 24px; font-weight: 600; }
.meta { flex: none; font-size: 24px; color: #666; }
.battery { flex: none; align-self: center; width: 30px; height: 24px; }

.map { position: relative; flex: 1; min-width: 0; overflow: hidden; border-radius: 0 0 16px 0; background: #eee; }
.map-canvas { display: block; width: 100%; height: 100%; font-family: Roboto, sans-serif; }
.water { fill: #c5e8ff; }
.land { fill: #eee; }
.border { fill: none; stroke: #a6a6a6; stroke-width: 4; }
.dashed { fill: none; stroke: #a0a0a0; stroke-width: 3; stroke-dasharray: 9 6; }
text { fill: #757575; text-anchor: middle; }
.region { font-size: 18px; font-weight: 500; letter-spacing: 2px; }
.sea { fill: #9dc0ff; font-size: 21px; letter-spacing: 1px; }
.slanted { letter-spacing: 0; }
.city { font-size: 24px; font-weight: 500; stroke: #fff; stroke-width: 5px; stroke-linejoin: round; paint-order: stroke; }
.city[text-anchor="start"] { text-anchor: start; }
.city[text-anchor="end"] { text-anchor: end; }
.city-dot { fill: #dedede; }
.country { font-size: 36px; font-weight: 700; stroke: #fff; stroke-width: 5px; stroke-linejoin: round; paint-order: stroke; }
.country.small { font-size: 28px; }
.google { fill: #fff; font-family: Lato, sans-serif; font-size: 36px; font-weight: 700; text-anchor: start; stroke: #86a2ba; stroke-width: 5px; stroke-linejoin: round; paint-order: stroke; }
.pin { filter: drop-shadow(0 2px 2px rgba(0, 0, 0, .4)); }
.arrow { fill: #fff; stroke: #fff; stroke-width: 1; stroke-linejoin: round; }
.tail { fill: none; stroke: #fff; stroke-width: 3; }
.controls { position: absolute; top: 24px; right: 24px; display: flex; flex-direction: column; gap: 22px; }
.control { overflow: hidden; border-radius: 8px; background: #fff; box-shadow: 0 0 4px rgba(0, 0, 0, .45); color: #5c5c5c; }
.control button { display: flex; align-items: center; justify-content: center; width: 72px; height: 73px; }
.control button + button { border-top: 2px solid #eee; }
.control .icon { stroke-width: 3; }
.control .pegman { fill: #fdbd2c; stroke: #8a7440; stroke-width: 1; overflow: visible; }
.legend { position: absolute; right: 24px; bottom: 48px; height: 72px; padding: 0 24px; border-radius: 8px; background: #fff; box-shadow: 0 0 4px rgba(0, 0, 0, .4); font-size: 24px; }
.attribution { position: absolute; right: 0; bottom: 0; display: flex; gap: 2px; font-family: "Liberation Sans", sans-serif; font-size: 20px; line-height: 28px; }
.attribution > * { padding: 0 11px; background: rgba(245, 245, 245, .75); }
</style>
